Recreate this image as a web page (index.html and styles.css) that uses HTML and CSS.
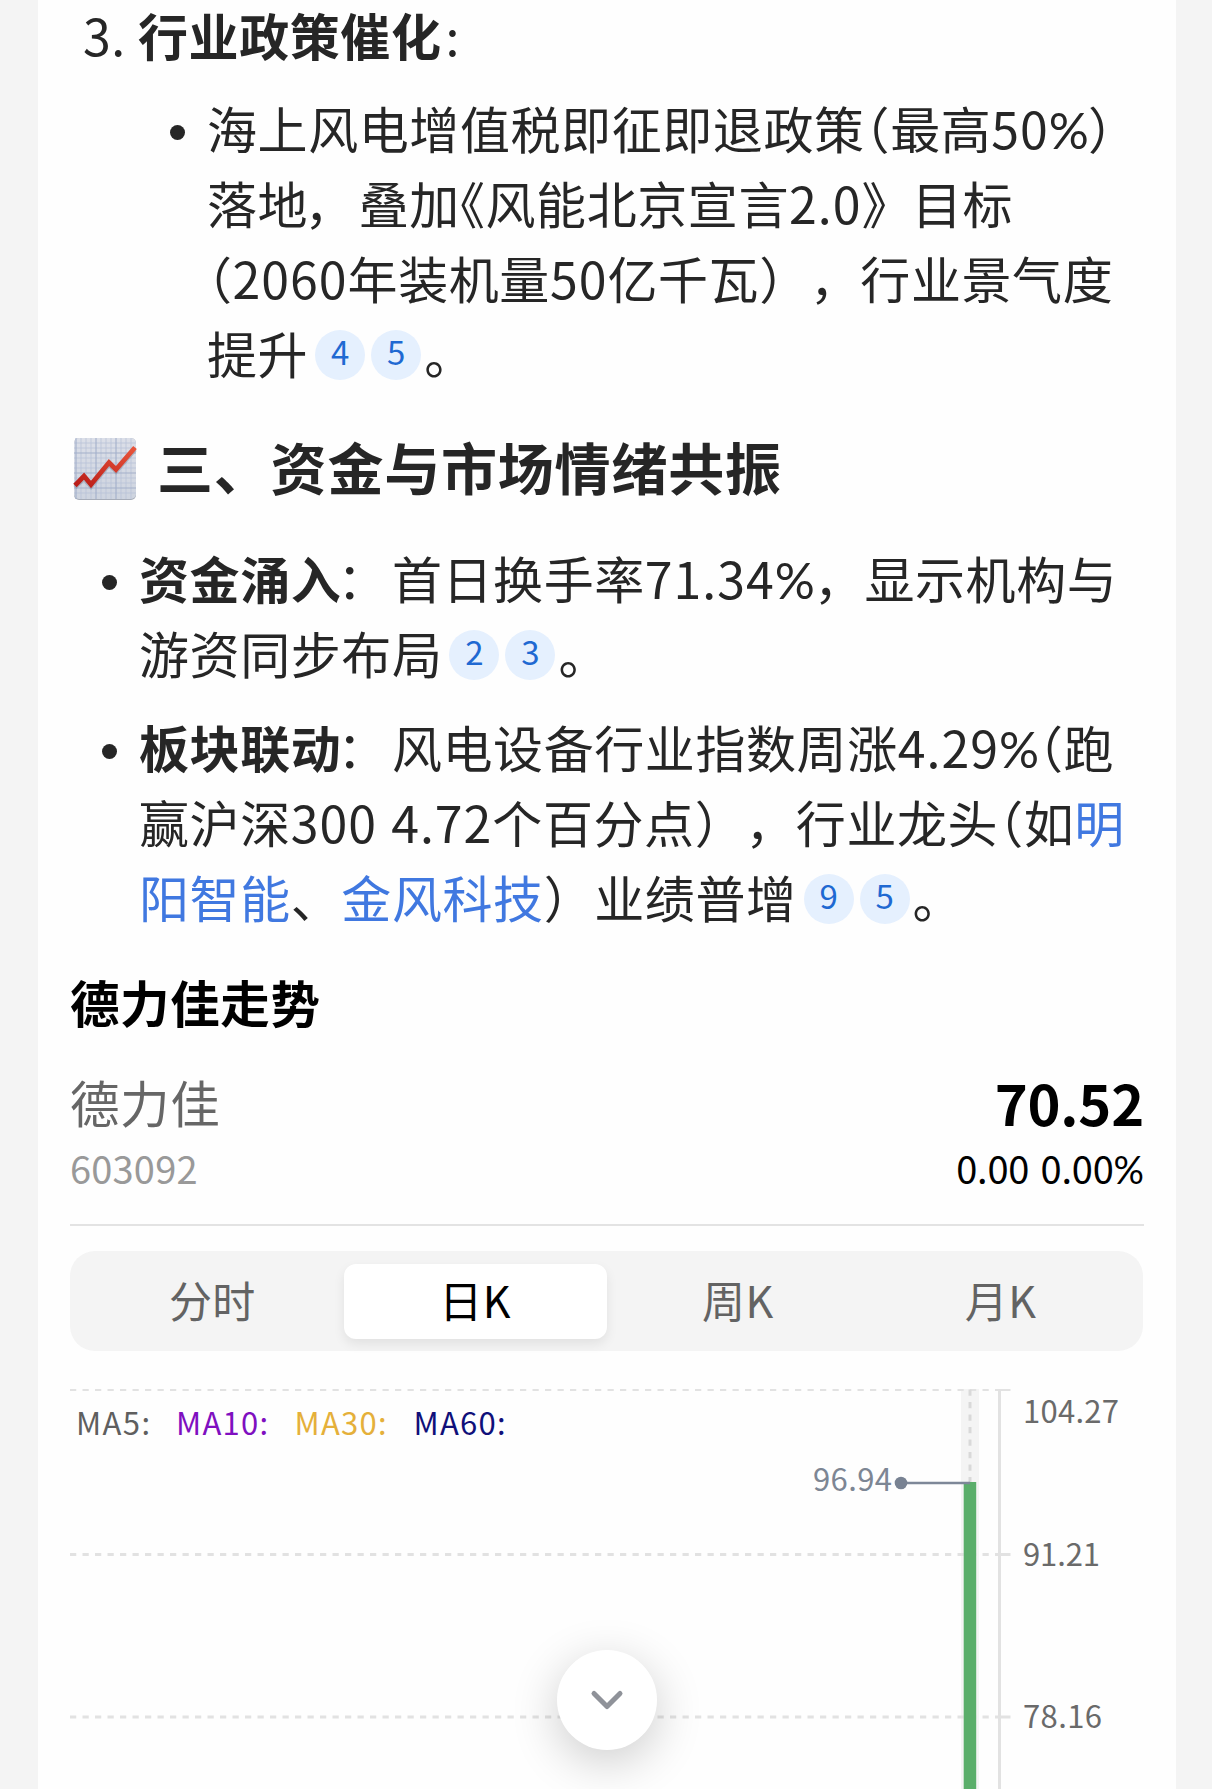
FILE: index.html
```html
<!DOCTYPE html>
<html lang="zh-CN">
<head>
<meta charset="utf-8">
<title>德力佳走势</title>
<link rel="stylesheet" href="styles.css">
</head>
<body>
<main class="panel">
  <section class="answer">
    <div class="item item-ordered">
      <span class="order">3.</span>
      <div class="lines"><p><b>行业政策催化</b><span class="colon">:</span></p></div>
    </div>
    <div class="item item-nested">
      <i class="dot"></i>
      <div class="lines">
        <p>海上风电增值税即征即退政策<span class="half">（</span>最高<span class="num">50<span class="pct">%</span></span><span class="half">）</span></p>
        <p>落地<span class="mark">，</span>叠加<span class="half">《</span>风能北京宣言<span class="num">2.0</span>》目标</p>
        <p><span class="half">（</span><span class="num">2060</span>年装机量<span class="num">50</span>亿千瓦），行业景气度</p>
        <p>提升<span class="cites"><a class="cite">4</a><a class="cite">5</a></span>。</p>
      </div>
    </div>
    <h2 class="heading">
      <svg class="emoji" viewBox="0 0 64 64" width="64" height="64">
        <defs>
          <linearGradient id="paper" x1="0" y1="0" x2="0" y2="1"><stop offset="0" stop-color="#dcdfe8"/><stop offset="1" stop-color="#ced4df"/></linearGradient>
          <linearGradient id="trend" x1="0" y1="1" x2="1" y2="0"><stop offset="0" stop-color="#b91c17"/><stop offset="1" stop-color="#e8553c"/></linearGradient>
        </defs>
        <rect x="1" y="1" width="62" height="62" rx="5" fill="#a6acb8"/>
        <rect x="1" y="1" width="62" height="61" rx="5" fill="url(#paper)"/>
        <path d="M8 1V62M13 1V62M18 1V62M28 1V62M33 1V62M38 1V62M48 1V62M53 1V62M58 1V62M1 6H63M1 11H63M1 21H63M1 26H63M1 31H63M1 41H63M1 46H63M1 56H63" stroke="#b9c3d8" stroke-width=".8"/>
        <path d="M3 1V62M23 1V62M43 1V62M1 16H63M1 36H63M1 51H63" stroke="#a3b0ca" stroke-width="1.1"/>
        <path d="M2 49L11 40L18 48L36 26L43 33L62 11" transform="translate(0 1.5)" fill="none" stroke="#7f8799" stroke-opacity=".45" stroke-width="4.500"/>
        <path d="M2 48.500L11 39L18 47.500L36 25.500L43 32.500L62 10.500" fill="none" stroke="url(#trend)" stroke-width="4.800"/>
      </svg>
      <span class="heading-text">三、资金与市场情绪共振</span>
    </h2>
    <div class="item">
      <i class="dot"></i>
      <div class="lines">
        <p><b>资金涌入</b><span class="mark">：</span>首日换手率<span class="num">71.34<span class="pct">%</span></span>，显示机构与</p>
        <p>游资同步布局<span class="cites"><a class="cite">2</a><a class="cite">3</a></span>。</p>
      </div>
    </div>
    <div class="item">
      <i class="dot"></i>
      <div class="lines">
        <p><b>板块联动</b><span class="mark">：</span>风电设备行业指数周涨<span class="num">4.29<span class="pct">%</span></span><span class="half">（</span>跑</p>
        <p>赢沪深<span class="num">300 4.72</span>个百分点），行业龙头<span class="half">（</span>如<a class="link">明</a></p>
        <p><a class="link">阳智能</a>、<a class="link">金风科技</a>）业绩普增<span class="cites"><a class="cite">9</a><a class="cite">5</a></span>。</p>
      </div>
    </div>
  </section>

  <section class="stock">
    <h3 class="stock-title">德力佳走势</h3>
    <div class="quote">
      <div class="quote-name"><span class="name">德力佳</span><span class="code">603092</span></div>
      <div class="quote-price"><span class="price">70.52</span><span class="change">0.00 0.00<span class="pct">%</span></span></div>
    </div>
    <nav class="tabs">
      <span class="tab">分时</span><span class="tab tab-on">日K</span><span class="tab">周K</span><span class="tab">月K</span>
    </nav>
    <svg class="chart" viewBox="70 1380 1074 409" width="1074" height="409">
      <rect x="961" y="1389" width="18" height="400" fill="#f4f4f4"/>
      <g stroke="#e2e2e2" stroke-dasharray="6.25 6.25">
        <path d="M70 1390H995" stroke-width="2"/>
        <path d="M70 1554.500H995M70 1717H995" stroke-width="3"/>
      </g>
      <path d="M995 1390H1010.500" stroke="#e2e2e2" stroke-width="2"/>
      <path d="M995 1554.500H1010.500M995 1717H1010.500M999.500 1389V1789" stroke="#e2e2e2" stroke-width="3"/>
      <path d="M970 1389.500V1483" stroke="#d9d9d9" stroke-width="3" stroke-dasharray="6.25 6.25"/>
      <rect x="963.700" y="1482" width="12.500" height="307" fill="#5aae6a"/>
      <path d="M901 1483H970" stroke="#7d8798" stroke-width="2.600"/>
      <circle cx="901" cy="1483" r="6.300" fill="#788292"/>
      <text x="813" y="1491" textLength="79" fill="#7d8694">96.94</text>
      <g fill="#6a6a6a">
        <text x="1023" y="1422.500" textLength="96">104.27</text>
        <text x="1023" y="1566" textLength="77">91.21</text>
        <text x="1023" y="1728" textLength="79">78.16</text>
      </g>
      <text x="76" y="1435" textLength="74" fill="#5f5f5f">MA5:</text>
      <text x="176" y="1435" textLength="92" fill="#7f0fc0">MA10:</text>
      <text x="294.500" y="1435" textLength="92" fill="#e5b03a">MA30:</text>
      <text x="413.500" y="1435" textLength="92" fill="#10107a">MA60:</text>
    </svg>
  </section>
</main>
<button class="scroll-down" aria-label="向下">
  <svg viewBox="0 0 100 100" width="100" height="100"><path d="M37 43.500L50 56.500L63 43.500" fill="none" stroke="#8f9299" stroke-width="5" stroke-linecap="round" stroke-linejoin="round"/></svg>
</button>
</body>
</html>
```
FILE: styles.css
```css
* { box-sizing: border-box; }
body {
  margin: 0;
  height: 1789px;
  overflow: hidden;
  background: #f4f4f4;
  color: #262626;
  font-family: "Noto Sans CJK SC", sans-serif;
  text-spacing-trim: space-all;
}
p, h2, h3 { margin: 0; }
.panel {
  display: flow-root;
  width: 1138px;
  height: 1789px;
  margin: 0 auto 0 38px;
  padding: 0 32px;
  background: #fefefe;
}
.answer { display: flow-root; height: 936px; }
.item {
  display: flex;
  padding-left: 31px;
  margin-bottom: 19px;
  font-size: 50px;
  line-height: 75px;
  letter-spacing: .58px;
  white-space: nowrap;
}
.item p { height: 75px; }
.item-ordered { padding-left: 13px; margin: -1px 0 21px; line-height: 70px; }
.item-ordered p { height: 70px; }
.order { width: 55px; }
.item-nested { padding-left: 99px; margin-bottom: 0; }
.dot {
  flex: none;
  width: 15px;
  height: 15px;
  margin: 35px 22px 0 1px;
  border-radius: 50%;
  background: #262626;
}
.half { font-feature-settings: "halt"; }
.num { letter-spacing: 1px; word-spacing: 2px; }
.pct { font-family: Lato, sans-serif; letter-spacing: 0; }
.item .pct { letter-spacing: -1px; }
.mark { position: relative; left: -4px; }
.colon { margin-left: 4px; }
.cites {
  display: inline-flex;
  gap: 6px;
  margin: 0 3px 0 7px;
  vertical-align: 9px;
  line-height: 1;
}
.cite {
  width: 50px;
  height: 50px;
  border-radius: 50%;
  background: #e5f0fe;
  color: #1f69d2;
  font-size: 33px;
  line-height: 43px;
  letter-spacing: 0;
  text-align: center;
}
.link { color: #4078e0; }
.heading {
  display: flex;
  align-items: center;
  gap: 20px;
  height: 84px;
  margin: 37px 0 29px 3px;
  font-size: 56px;
  line-height: 78px;
  letter-spacing: .8px;
  white-space: nowrap;
}
.heading-text { margin-bottom: 6px; }
.stock { color: #000; }
.stock-title { margin-top: 29px; font-size: 49.500px; line-height: 74px; letter-spacing: .6px; }
.quote {
  display: flex;
  justify-content: space-between;
  height: 185px;
  margin-top: 2px;
  border-bottom: 2px solid #e3e3e3;
}
.quote-name, .quote-price { display: flex; flex-direction: column; padding-top: 24px; }
.quote-price { align-items: flex-end; }
.name { height: 74px; font-size: 49.500px; line-height: 74px; letter-spacing: .6px; color: #666; }
.code, .change { font-size: 38px; line-height: 58px; white-space: pre; letter-spacing: .2px; word-spacing: 3px; }
.code { color: #999; }
.change { letter-spacing: -.2px; }
.price { height: 74px; font-size: 56px; font-weight: 700; line-height: 74px; letter-spacing: -.2px; }
.tabs {
  display: grid;
  grid-template-columns: repeat(4, 1fr);
  width: 1073px;
  height: 100px;
  margin-top: 25px;
  padding: 13px 11px 12px;
  border-radius: 25px;
  background: #f4f4f4;
}
.tab {
  border-radius: 12px;
  font-size: 43px;
  line-height: 71px;
  letter-spacing: .5px;
  text-align: center;
  color: #636363;
}
.tab-on { background: #fff; color: #000; box-shadow: 0 5px 12px rgba(0, 0, 0, .08); }
.chart { display: block; margin-top: 29px; font-size: 31px; }
.scroll-down {
  position: fixed;
  left: 557px;
  top: 1650px;
  width: 100px;
  height: 100px;
  padding: 0;
  border: 0;
  border-radius: 50%;
  background: #fff;
  box-shadow: 0 12px 48px rgba(0, 0, 0, .2);
}
```
